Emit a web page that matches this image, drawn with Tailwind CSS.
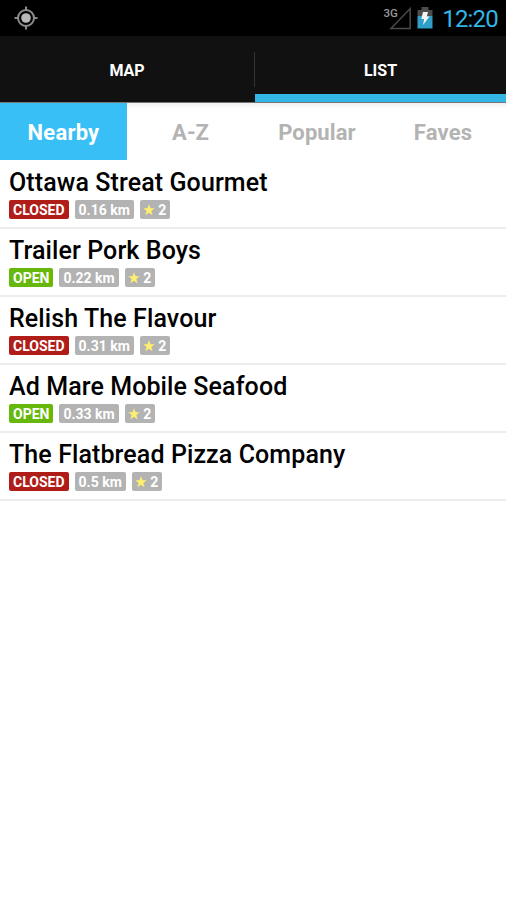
<!DOCTYPE html>
<html lang="en">
<head>
  <meta charset="UTF-8" />
  <meta name="viewport" content="width=device-width, initial-scale=1.0" />
  <title>Food Trucks</title>
  <script src="https://cdn.jsdelivr.net/npm/@tailwindcss/browser@4"></script>
</head>
<body class="bg-white text-black font-['Roboto',sans-serif] min-h-screen overflow-hidden">
  <!-- Status bar -->
  <header class="h-9 bg-black flex items-center justify-between pl-[14px] pr-2">
    <svg class="w-6 h-6" viewBox="0 0 24 24" fill="none" stroke="#8c8c8c">
      <circle cx="12" cy="12" r="8" stroke-width="2" />
      <circle cx="12" cy="12" r="4.8" fill="#b8b8b8" stroke="none" />
      <path d="M12 .5v4M12 19.500v4M.5 12h4M19.500 12h4" stroke-width="2" />
    </svg>
    <div class="flex items-center">
      <svg class="w-[28px] h-6 mr-[6px]" viewBox="0 0 28 24">
        <path d="M27.200 2.500V22.500H8z" fill="none" stroke="#4a4a4a" stroke-width="1.500" />
        <text x="0.500" y="10.500" font-size="11.500" font-weight="500" fill="#989898">3G</text>
      </svg>
      <svg class="w-4 h-[22px] mr-[9px]" viewBox="0 0 16 22">
        <path d="M4.500 0h7v3H15.500v6H.5V3h4z" fill="#4c4c4c" />
        <path d="M.5 9h15v12.500H.5z" fill="#2f9fc9" />
        <path d="M6 5h5L9.800 9.500h2.700L6 18l1.200-6H4.300z" fill="#f4f4f4" />
      </svg>
      <span class="text-[24px] leading-9 pt-0.5 tracking-[-0.8px] text-[#33b5e5]">12:20</span>
    </div>
  </header>

  <!-- Action bar tabs -->
  <nav class="h-[67px] bg-[#111] grid grid-cols-[254px_1px_251px] text-white text-base font-bold border-b border-[#777]">
    <div class="flex items-center justify-center pt-[3px]">MAP</div>
    <div class="w-px h-[35px] mt-[16px] bg-[#333]"></div>
    <div class="flex items-center justify-center pt-[11px] border-b-8 border-[#33b5e5]">LIST</div>
  </nav>

  <!-- Sort tabs -->
  <div class="h-[57px] grid grid-cols-[127px_127px_126px_126px] text-[22px] font-bold text-[#b3b3b3] bg-linear-to-b from-[#f0f0f0] to-white to-10%">
    <div class="flex items-center justify-center pt-0.5 bg-[#38bff5] text-white tracking-[0.2px]">Nearby</div>
    <div class="flex items-center justify-center pt-0.5">A-Z</div>
    <div class="flex items-center justify-center pt-0.5 tracking-[0.1px]">Popular</div>
    <div class="flex items-center justify-center pt-0.5 tracking-[0.2px]">Faves</div>
  </div>

  <main id="trucks"></main>

  <script>
    const trucks = [
      { name: "Ottawa Streat Gourmet", open: false, distance: "0.16 km", stars: 2 },
      { name: "Trailer Pork Boys", open: true, distance: "0.22 km", stars: 2 },
      { name: "Relish The Flavour", open: false, distance: "0.31 km", stars: 2 },
      { name: "Ad Mare Mobile Seafood", open: true, distance: "0.33 km", stars: 2 },
      { name: "The Flatbread Pizza Company", open: false, distance: "0.5 km", stars: 2 },
    ];

    document.getElementById("trucks").innerHTML = trucks
      .map((t, i) => `
        <div class="${i === 0 ? "h-[69px]" : "h-[68px]"} pl-[9px] ${i === 0 ? "pt-[7px]" : "pt-[6px]"} border-b-2 border-[#ececec]">
          <h2 class="text-[25px] leading-8 font-medium tracking-[0.1px] whitespace-nowrap">${t.name}</h2>
          <div class="flex gap-[6px] mt-px text-[14px] leading-[20px] font-bold text-white">
            <span class="h-[19px] px-1 rounded-[2px] ${t.open ? "bg-[#67b80c]" : "bg-[#b01c18]"}">${t.open ? "OPEN" : "CLOSED"}</span>
            <span class="h-[19px] px-1 rounded-[2px] bg-[#b3b3b3]">${t.distance}</span>
            <span class="h-[19px] pl-[3.500px] pr-1 rounded-[2px] bg-[#b3b3b3] flex items-center gap-[3px]">
              <svg class="w-3 h-3" viewBox="0 0 12 12" fill="#fff06e"><path d="M6 .3l1.500 4h4.200L8.300 6.900l1.300 4.400L6 8.700l-3.600 2.600 1.300-4.400L.3 4.300h4.200z" /></svg>
              <span class="pt-px">${t.stars}</span>
            </span>
          </div>
        </div>
      `).join("");
  </script>
</body>
</html>
